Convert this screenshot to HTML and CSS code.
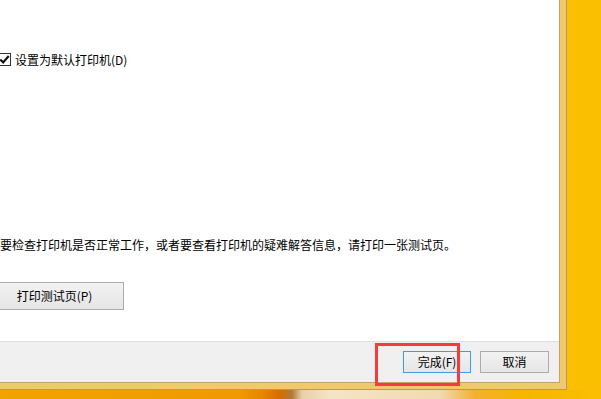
FILE: index.html
```html
<!DOCTYPE html>
<html lang="zh-CN">
<head>
<meta charset="utf-8">
<title>添加打印机</title>
<link rel="stylesheet" href="styles.css">
</head>
<body>
<div class="page">
  <div class="frame">
    <div class="window">
      <div class="main">
        <label class="check-row">
          <span class="checkbox">
            <svg width="11" height="11" viewBox="0 0 11 11"><path d="M1.3 5.4 L4.2 8.4 L9.7 2" fill="none" stroke="#111" stroke-width="2.2"/></svg>
          </span>
          <span class="check-label">设置为默认打印机(D)</span>
        </label>
        <p class="info">要检查打印机是否正常工作，或者要查看打印机的疑难解答信息，请打印一张测试页。</p>
        <button class="btn test-btn">打印测试页(P)</button>
      </div>
      <div class="footer">
        <button class="btn btn-default">完成(F)</button>
        <button class="btn">取消</button>
      </div>
    </div>
  </div>
  <div class="strip"></div>
  <div class="highlight"></div>
</div>
</body>
</html>
```
FILE: styles.css
```css
* { box-sizing: border-box; }
html, body {
  margin: 0;
  padding: 0;
  width: 601px;
  height: 399px;
  overflow: hidden;
}
body {
  background: #fbbf02;
  font-family: "Noto Sans CJK SC", "Noto Sans", sans-serif;
  font-size: 12px;
  color: #000;
}
.page {
  position: relative;
  width: 601px;
  height: 399px;
  display: flex;
  flex-direction: column;
}
.frame {
  width: 567px;
  height: 390px;
  background: #f1c96c;
  border-right: 1px solid #b99a5c;
  border-bottom: 1px solid #b99a5c;
  padding: 0 6px 6px 0;
}
.window {
  width: 560px;
  height: 383px;
  background: #fff;
  border-right: 1px solid #c4a462;
  border-bottom: 1px solid #c4a462;
  display: flex;
  flex-direction: column;
}
.main {
  height: 341px;
  display: flex;
  flex-direction: column;
  align-items: flex-start;
}
.check-row {
  margin-top: 51px;
  height: 17px;
  display: flex;
  align-items: center;
  margin-left: -2px;
}
.checkbox {
  width: 13px;
  height: 13px;
  border: 1px solid #333;
  background: #fff;
  display: flex;
  align-items: center;
  justify-content: center;
}
.check-label {
  margin-left: 4px;
  line-height: 17px;
}
.info {
  margin: 169px 0 0 0;
  line-height: 16px;
  white-space: nowrap;
}
.btn {
  font-family: "Noto Sans CJK SC", "Noto Sans", sans-serif;
  font-size: 12px;
  color: #000;
  background: linear-gradient(#f2f2f2, #e6e6e6);
  border: 1px solid #acacac;
  padding: 0;
  margin: 0;
  width: 69px;
  height: 22px;
  line-height: 18px;
}
.test-btn {
  margin-top: 29px;
  margin-left: -15px;
  width: 139px;
  height: 28px;
}
.footer {
  height: 41px;
  border-top: 1px solid #dfdfdf;
  background: #f0f0f0;
  display: flex;
  justify-content: flex-end;
  align-items: flex-start;
  gap: 9px;
  padding: 9px 10px 0 0;
}
.btn-default {
  width: 68px;
  border-color: #3d9be9;
}
.strip {
  height: 9px;
  background: linear-gradient(90deg, #f3a300 0px, #ef9a00 240px, #e68200 265px, #d56c05 280px, #b07a3a 292px, #e8d0a8 302px, #f4e4c6 330px, #f1dab0 440px, #f3b030 475px, #f7b400 520px, #fbbf02 601px);
}
.highlight {
  position: absolute;
  left: 375px;
  top: 343px;
  width: 85px;
  height: 43px;
  border: 3px solid #f43c3c;
}
```
